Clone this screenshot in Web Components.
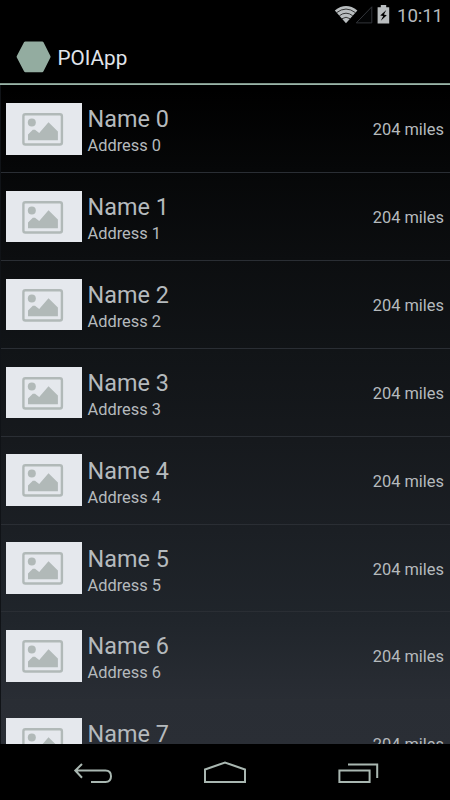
<!DOCTYPE html>
<html lang="en">
<head>
<meta charset="utf-8">
<title>POIApp</title>
<style>
html, body { margin: 0; height: 100%; background: #000; overflow: hidden; }
</style>
</head>
<body>
<poi-screen></poi-screen>
<script>
const define = (name, markup, setup) => customElements.define(name, class extends HTMLElement {
  constructor() {
    super();
    const t = document.createElement('template');
    t.innerHTML = markup;
    this.attachShadow({ mode: 'open' }).append(t.content.cloneNode(true));
  }
  connectedCallback() { if (setup) setup(this, this.shadowRoot); }
});

define('status-bar', `
<style>
:host { display: flex; height: 30px; justify-content: flex-end; align-items: center; box-sizing: border-box; padding-right: 8px; color: #b5b9bc; font-size: 18.8px; line-height: 28px; background: #000; }
svg { display: block; flex: none; }
span { width: 45px; margin-left: 6px; padding-top: 2px; white-space: nowrap; text-align: right; letter-spacing: -.15px; }
</style>
<svg width="58" height="30" viewBox="0 0 58 30">
  <path d="M1.8 10.4Q13 1.6 24.4 10.4L13 23.3Z" fill="#b9bdbf"/>
  <path d="M3.5 12.7Q13 5.4 22.5 12.7M6.4 15.7Q13 10.7 19.7 15.7M9 18.7Q13 15.8 17.1 18.7" fill="none" stroke="#111" stroke-width=".8"/>
  <path d="M23.3 22.9H38.8V6.8Z" fill="#030405" stroke="#32353a" stroke-width="1"/>
  <path d="M44.6 7.2H47.8V5H53.2V7.2H56.2V23.6H44.6Z" fill="#b9bdbf"/>
  <path d="M53.3 10L47.2 15.4L50.2 16.1L47.8 20.8L53.8 15.2L50.9 14.4Z" fill="#000"/>
</svg><span><slot></slot></span>`);

define('action-bar', `
<style>
:host { display: flex; flex-direction: column; height: 55.4px; background: #000; color: #e0e5ec; font-size: 20.7px; }
.bar { display: flex; height: 53px; box-sizing: border-box; align-items: center; padding: 0 0 0 16px; }
.title { padding-top: 2px; }
.accent { height: 2.4px; flex: none; background: linear-gradient(#7d9388 1px, #9ab5a9 1px 2px, #53645d 2px); }
svg { display: block; margin-right: 6.5px; }
</style>
<div class="bar"><svg width="35" height="32" viewBox="0 0 35 32"><path d="M9.4.5H26.2Q27 .5 27.5 1.3L34.4 15Q34.8 15.8 34.4 16.5L27.5 30.3Q27 31.2 26.2 31.2H9.4Q8.5 31.2 8 30.3L.8 16.5Q.4 15.8 .8 15L8 1.3Q8.5.5 9.4.5Z" fill="#93aca0"/></svg>
<div class="title"><slot></slot></div></div><div class="accent"></div>`);

define('photo-placeholder', `
<style>:host { display: block; width: 75.5px; height: 51.5px; flex: none; background: #e5e8ed; }
svg { display: block; }</style>
<svg width="75.5" height="51.5" viewBox="0 0 75.5 51.5">
<rect x="17.4" y="11.2" width="38.5" height="30.3" rx="2" fill="none" stroke="#b1b9b8" stroke-width="2.4"/>
<circle cx="25.8" cy="19.6" r="4" fill="#b1b9b8"/>
<path d="M22 37.2V31.5L26.8 26.8H29L33.2 30L42.5 19.2L51.9 28.5V37.2Z" fill="#b1b9b8"/>
</svg>`);

define('poi-row', `
<style>
:host { display: flex; box-sizing: border-box; height: 87.85px; flex: none; align-items: center; padding: 0 6px; border-bottom: 1px solid #2a2e34; color: #b5babd; }
.text { flex: 1; margin-left: 6px; padding-top: 4px; }
.name { font-size: 23.4px; line-height: 28px; }
.address { font-size: 16.4px; line-height: 20px; margin-top: 3px; }
.distance { font-size: 16.4px; line-height: 20px; padding-top: 3px; }
</style>
<photo-placeholder></photo-placeholder>
<div class="text"><div class="name"><slot name="name"></slot></div><div class="address"><slot name="address"></slot></div></div>
<div class="distance"><slot name="distance"></slot></div>`);

define('poi-list', `
<style>:host { display: flex; flex-direction: column; flex: 1; min-height: 0; overflow: hidden; box-sizing: border-box; border-left: 1px solid #101317; }
poi-row { margin-left: -1px; }</style>`, (host, root) => {
  for (let i = 0; i < 8; i++) {
    const row = document.createElement('poi-row');
    for (const [slot, text] of [['name', 'Name ' + i], ['address', 'Address ' + i], ['distance', '204 miles']]) {
      const s = document.createElement('span');
      s.slot = slot;
      s.textContent = text;
      row.append(s);
    }
    root.append(row);
  }
});

define('navigation-bar', `
<style>
:host { display: flex; height: 56px; flex: none; align-items: center; justify-content: space-between; box-sizing: border-box; padding: 0 71px 0 73px; background: #000; }
svg { display: block; fill: none; stroke: #a9b7b1; stroke-width: 2; }
</style>
<svg width="40" height="28" viewBox="0 0 40 28"><path d="M9 6L2.3 12.5L9 19.7M2.5 12.6H32.5Q38 12.6 38 18.3Q38 24 32.5 24H18"/></svg>
<svg width="44" height="28" viewBox="0 0 44 28"><path d="M2 11.5L22 4.5L42 11.5V24H2Z"/></svg>
<svg width="42" height="28" viewBox="0 0 42 28"><path d="M2.4 12.4H32.6V24H2.4ZM11 6.6H40.2V20"/></svg>`);

define('poi-screen', `
<style>
:host { display: flex; flex-direction: column; width: 450px; height: 800px; overflow: hidden; font-family: Roboto, "Noto Sans", sans-serif; background: linear-gradient(#000 90px, #060708 170px, #0c0e10 260px, #111417 350px, #16191d 440px, #1b1f24 530px, #20252b 620px, #292d34 700px, #2a2e35 744px); }
status-bar, action-bar { flex: none; }
</style>
<status-bar>10:11</status-bar>
<action-bar>POIApp</action-bar>
<poi-list></poi-list>
<navigation-bar></navigation-bar>`);
</script>
</body>
</html>
